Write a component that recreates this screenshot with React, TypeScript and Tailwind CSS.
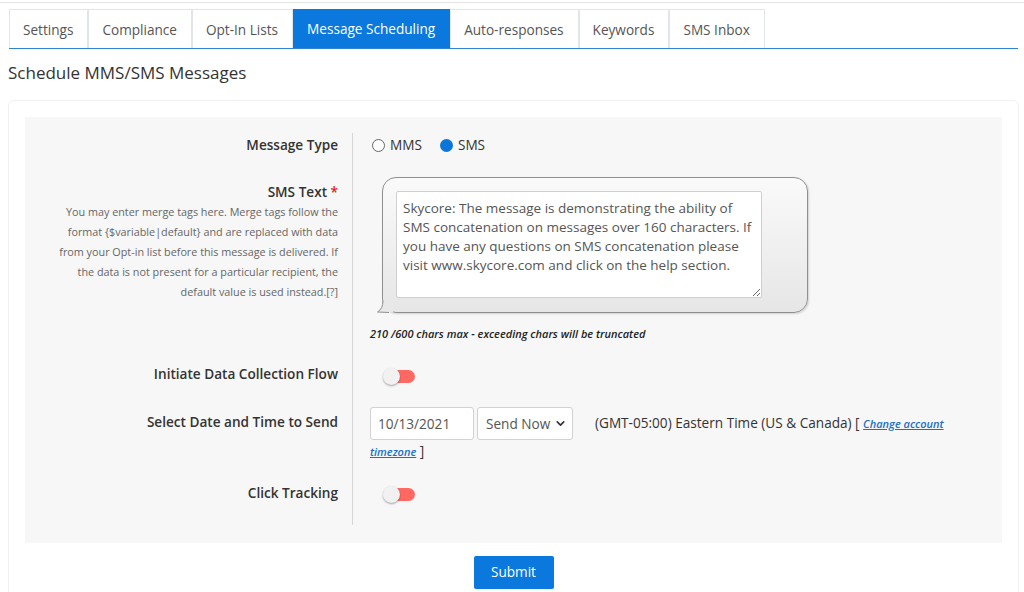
import { ChevronDown } from 'lucide-react';

const tabs = ['Settings', 'Compliance', 'Opt-In Lists', 'Message Scheduling', 'Auto-responses', 'Keywords', 'SMS Inbox'];

const smsText =
  'Skycore: The message is demonstrating the ability of SMS concatenation on messages over 160 characters. If you have any questions on SMS concatenation please visit www.skycore.com and click on the help section.';

function Toggle() {
  return (
    <div className="relative h-[17px] w-[32px]">
      <div className="absolute left-[2px] top-[2px] h-[13px] w-[30px] rounded-full bg-[#ff6961]" />
      <div className="absolute left-0 top-0 h-[17px] w-[17px] rounded-full bg-[#f1f1f1] shadow-[0_1px_2px_rgba(0,0,0,0.35)]" />
    </div>
  );
}

function Row({ label, children, className }: { label: React.ReactNode; children: React.ReactNode; className?: string }) {
  return (
    <div className="flex">
      <div className={`w-[328px] shrink-0 border-r border-[#d6d6d6] pr-[14px] text-right ${className ?? ''}`}>{label}</div>
      <div className={`flex-1 pl-[17px] pr-[40px] ${className ?? ''}`}>{children}</div>
    </div>
  );
}

export default function App() {
  return (
    <div className="min-h-screen bg-white font-['Open_Sans',sans-serif] text-[13.6px] text-[#333]">
      <div className="h-[3px] border-b border-[#e4e4e4]" />

      <div className="ml-[9px] mr-[6px] mt-[6px] flex border-b border-[#2f82d2]">
        {tabs.map((t) => (
          <div
            key={t}
            className={
              t === 'Message Scheduling'
                ? 'flex h-[39px] items-center border border-[#0a78dc] bg-[#0a78dc] pl-[13px] pr-[14px] pt-[2px] text-white'
                : 'flex h-[39px] items-center border border-[#e3e6e9] border-b-0 pl-[13px] pr-[14px] pt-[2px] text-[#555]'
            }
          >
            {t}
          </div>
        ))}
      </div>

      <h1 className="ml-[8px] mt-[12px] text-[17px] leading-[24px] text-[#333]">Schedule MMS/SMS Messages</h1>

      <div className="ml-[8px] mr-[5px] mt-[15px] rounded-[6px] border border-[#f0f0f2] bg-white px-[16px] pb-[40px] pt-[16px]">
        <div className="bg-[#f7f7f7] pb-[18px] pt-[16px]">
          <Row label={<span className="font-semibold leading-[24px]">Message Type</span>} className="pb-[20px]">
            <div className="flex h-[24px] items-center text-[13.6px] text-[#333]">
              <span className="ml-[2px] h-[13px] w-[13px] rounded-full border border-[#666] bg-white" />
              <span className="ml-[5px]">MMS</span>
              <span className="ml-[18px] h-[13px] w-[13px] rounded-full bg-[#0a76d9]" />
              <span className="ml-[5px]">SMS</span>
            </div>
          </Row>

          <Row
            className="pb-[20px]"
            label={
              <div className="pt-[5px]">
                <div className="font-semibold leading-[20px]">
                  SMS Text <span className="text-[#e02020]">*</span>
                </div>
                <p className="ml-auto w-[283px] text-[10.8px] leading-[20px] text-[#666]">
                  You may enter merge tags here. Merge tags follow the format {'{$variable|default}'} and are replaced with data from
                  your Opt-in list before this message is delivered. If the data is not present for a particular recipient, the default
                  value is used instead.[?]
                </p>
              </div>
            }
          >
            <div className="relative ml-[12px] h-[136px] w-[426px] rounded-[14px] border border-[#8f8f8f] bg-gradient-to-b from-[#fafafa] to-[#e6e6e6] px-[13px] pt-[13px] shadow-[1px_1px_2px_rgba(0,0,0,0.15)]">
              <svg className="absolute -left-[6px] bottom-[-1px]" width="16" height="12" viewBox="0 0 16 12">
                <path d="M6 0 C6 5 4 9 0.5 11 L16 11.5 L16 0 Z" fill="#e8e8e8" />
                <path d="M6 0 C6 5 4 9 0.5 11 L12 11.5" fill="none" stroke="#8f8f8f" strokeWidth="1" />
              </svg>
              <textarea
                readOnly
                defaultValue={smsText}
                className="block h-[107px] w-[366px] resize-y rounded-[2px] border border-[#cfcfcf] bg-white pl-[6px] pr-[2px] pt-[7px] text-[13.5px] leading-[19px] text-[#555] outline-none"
              />
            </div>
            <div className="mt-[13px] text-[11px] font-semibold italic leading-[16px] text-[#222]">
              210 /600 chars max - exceeding chars will be truncated
            </div>
          </Row>

          <Row label={<span className="font-semibold leading-[24px]">Initiate Data Collection Flow</span>} className="pb-[21px]">
            <div className="flex h-[24px] items-center pl-[13px] pt-[4px]">
              <Toggle />
            </div>
          </Row>

          <Row label={<div className="pt-[5px] font-semibold leading-[20px]">Select Date and Time to Send</div>} className="pb-[19px]">
            <div className="leading-[20px]">
              <span className="inline-flex h-[33px] w-[104px] items-center rounded-[3px] border border-[#d2d2d2] bg-white px-[7px] align-middle text-[#555]">
                10/13/2021
              </span>
              <span className="ml-[3px] inline-flex h-[33px] w-[96px] items-center justify-between rounded-[3px] border border-[#d2d2d2] bg-white pl-[8px] pr-[5px] align-middle text-[#555]">
                Send Now
                <ChevronDown size={13} strokeWidth={3} className="text-[#333]" />
              </span>
              <span className="ml-[22px] align-middle">
                (GMT-05:00) Eastern Time (US &amp; Canada) [{' '}
                <a className="text-[11px] font-semibold italic text-[#1a6fc9] underline">Change account timezone</a> ]
              </span>
            </div>
          </Row>

          <Row label={<span className="font-semibold leading-[24px]">Click Tracking</span>} className="pb-[20px]">
            <div className="flex h-[24px] items-center pl-[13px] pt-[4px]">
              <Toggle />
            </div>
          </Row>
        </div>

        <div className="mt-[13px] flex justify-center">
          <button className="h-[33px] w-[80px] rounded-[2px] bg-[#0a78dc] text-[13.6px] text-white">Submit</button>
        </div>
      </div>
    </div>
  );
}
